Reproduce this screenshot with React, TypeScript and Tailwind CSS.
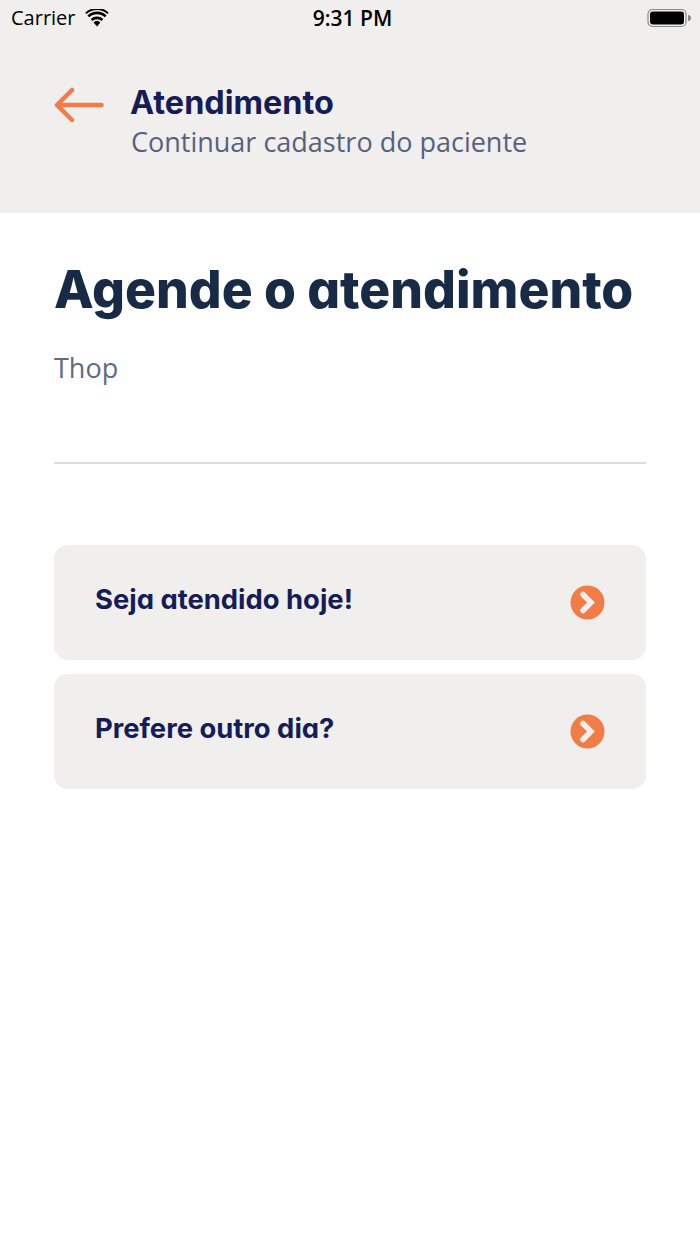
export default function App() {
  const Row = ({ label, mb }: { label: string; mb?: boolean }) => (
    <div className={`h-[115px] rounded-[14px] bg-[#f0efee] flex items-center justify-between pl-[41px] pr-[41px] ${mb ? "mb-[14px]" : ""}`}>
      <span className="font-['Inter'] [font-feature-settings:'cv11'] font-bold text-[27.4px] leading-none text-[#151c58] relative -top-[3px]">{label}</span>
      <svg width="35" height="35" viewBox="0 0 35 35">
        <circle cx="17.5" cy="17.5" r="17" fill="#f27c47" />
        <path d="M13 9.5 L21 17.5 L13 25.5" fill="none" stroke="#f0efee" strokeWidth="5.5" strokeLinecap="round" strokeLinejoin="miter" />
      </svg>
    </div>
  );
  return (
    <div className="w-[700px] h-[1244px] bg-white overflow-hidden">
      <header className="h-[213px] bg-[#f0efee]">
        <div className="h-[36px] flex items-center justify-between pl-[11px] pr-[8px] relative">
          <div className="flex items-center gap-[9px]">
            <span className="font-['Open_Sans'] text-[20px] text-black leading-none">Carrier</span>
            <svg width="24" height="18" viewBox="0 0 24 18">
              <path d="M12 17.5 L8.6 13.4 A5 5 0 0 1 15.4 13.4 Z" fill="#000" />
              <path d="M6.6 11 A8 8 0 0 1 17.4 11" fill="none" stroke="#000" strokeWidth="2.6" />
              <path d="M3.3 7.4 A12.6 12.6 0 0 1 20.7 7.4" fill="none" stroke="#000" strokeWidth="2.6" />
              <path d="M0.9 4.4 A16 16 0 0 1 23.1 4.4" fill="none" stroke="#000" strokeWidth="2" />
            </svg>
          </div>
          <span className="absolute left-0 right-0 text-center font-['Open_Sans'] font-semibold text-[21px] leading-none text-black pl-[5px]">9:31 PM</span>
          <svg width="45" height="20" viewBox="0 0 45 20">
            <rect x="1" y="1.5" width="38" height="17" rx="4.5" fill="none" stroke="#8a8a8a" strokeWidth="1.2" />
            <rect x="3" y="3.5" width="34" height="13" rx="3" fill="#000" />
            <path d="M41 7 A3 3 0 0 1 41 13 Z" fill="#8a8a8a" />
          </svg>
        </div>
        <div className="flex items-start pl-[54px] pt-[44px]">
          <svg width="50" height="36" viewBox="0 0 50 36" className="mt-[7px] shrink-0">
            <path d="M47.5 18 H3 M18 3 L3 18 L18 33" fill="none" stroke="#f27c47" strokeWidth="4.5" strokeLinecap="round" strokeLinejoin="round" />
          </svg>
          <div className="ml-[27px]">
            <div className="font-['Inter'] [font-feature-settings:'cv11'] font-bold text-[32.4px] leading-[44px] text-[#151c58] -ml-px pt-px -mb-px">Atendimento</div>
            <div className="font-['Open_Sans'] text-[27px] leading-[36px] text-[#56617f]">Continuar cadastro do paciente</div>
          </div>
        </div>
      </header>
      <main className="px-[54px]">
        <h1 className="font-['Inter'] [font-feature-settings:'cv11'] font-extrabold text-[51.6px] leading-[64px] text-[#172b46] mt-[44px] whitespace-nowrap">Agende o atendimento</h1>
        <p className="font-['Open_Sans'] text-[27px] leading-[36px] text-[#606a85] mt-[29px]">Thop</p>
        <div className="h-[2px] bg-[#dddddd] mt-[76px] mb-[81px]" />
        <Row label="Seja atendido hoje!" mb />
        <Row label="Prefere outro dia?" />
      </main>
    </div>
  );
}
